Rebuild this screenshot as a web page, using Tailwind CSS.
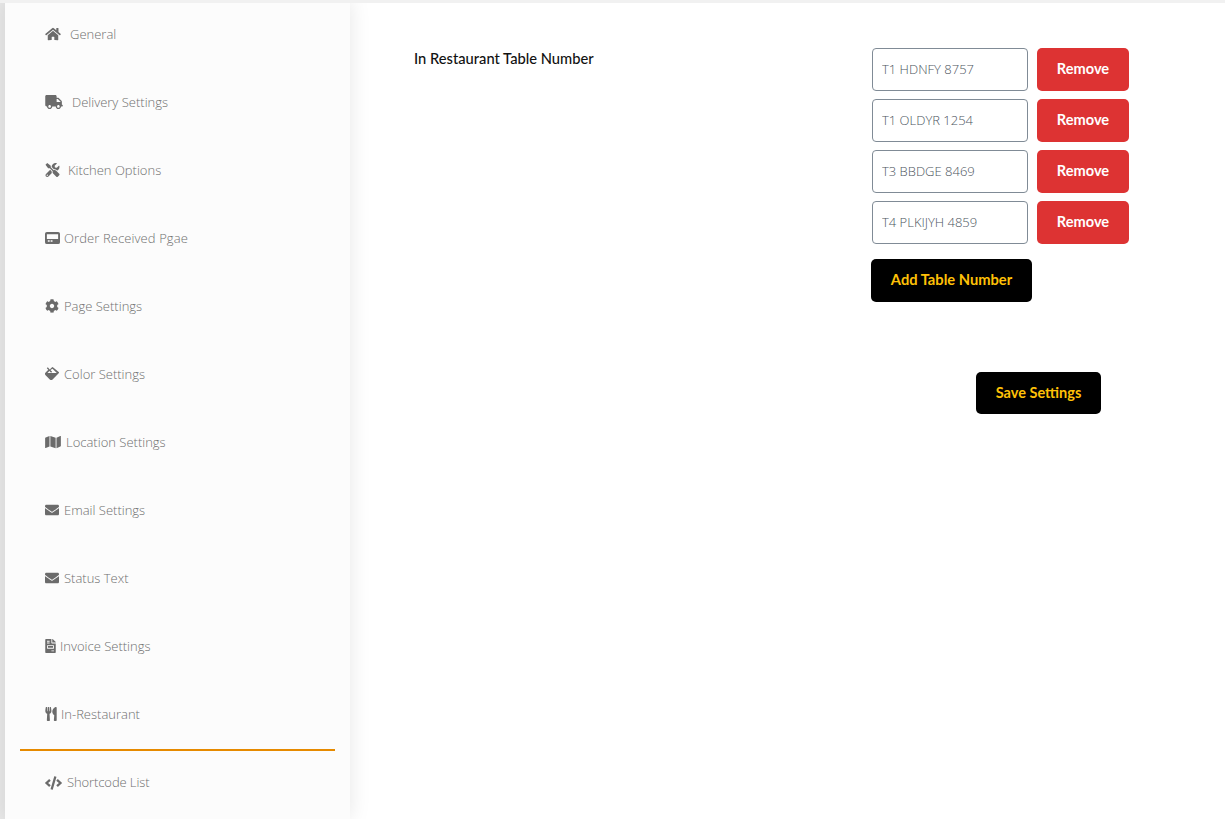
<!DOCTYPE html>
<html lang="en">
<head>
  <meta charset="UTF-8" />
  <title>In-Restaurant Settings</title>
  <meta name="viewport" content="width=device-width, initial-scale=1.0" />
  <script src="https://cdn.jsdelivr.net/npm/@tailwindcss/browser@4"></script>
</head>
<body class="bg-white h-[819px] overflow-hidden relative flex font-['Open_Sans',sans-serif]">
  <div class="absolute top-0 left-0 w-full h-[3px] bg-[#f1f1f1] z-10"></div>
  <div class="w-[5px] bg-[#e8e8e8]"></div>

  <aside class="w-[345px] bg-[#fcfcfc] shadow-[0_0_20px_rgba(0,0,0,0.1)] flex flex-col pl-[15px] pr-[15px] text-[13px] font-light text-[#6f6f6f]">
    <a class="h-[68px] flex items-center pl-[25px]">
      <svg class="h-[14px] w-[16px] fill-[#6b6b6b] mr-[9px]" viewBox="0 0 576 512"><path d="M280.37 148.26L96 300.11V464a16 16 0 0 0 16 16l112.06-.29a16 16 0 0 0 15.92-16V368a16 16 0 0 1 16-16h64a16 16 0 0 1 16 16v95.64a16 16 0 0 0 16 16.05L464 480a16 16 0 0 0 16-16V300L295.67 148.26a12.19 12.19 0 0 0-15.3 0zM571.6 251.47L488 182.56V44.05a12 12 0 0 0-12-12h-56a12 12 0 0 0-12 12v72.61L318.47 43a48 48 0 0 0-61 0L4.34 251.47a12 12 0 0 0-1.6 16.9l25.5 31A12 12 0 0 0 45.15 301l235.22-193.74a12.19 12.19 0 0 1 15.3 0L530.9 301a12 12 0 0 0 16.9-1.6l25.5-31a12 12 0 0 0-1.7-16.93z"/></svg>
      <span class="pt-[2px]">General</span>
    </a>
    <a class="h-[68px] flex items-center pl-[25px]">
      <svg class="h-[14px] w-[18px] fill-[#6b6b6b] mr-[9px]" viewBox="0 0 640 512"><path d="M624 352h-16V243.900c0-12.700-5.100-24.900-14.100-33.900L494 110.100c-9-9-21.200-14.100-33.900-14.100H416V48c0-26.500-21.500-48-48-48H48C21.500 0 0 21.500 0 48v320c0 26.500 21.500 48 48 48h16c0 53 43 96 96 96s96-43 96-96h128c0 53 43 96 96 96s96-43 96-96h48c8.800 0 16-7.200 16-16v-32c0-8.800-7.200-16-16-16zM160 464c-26.500 0-48-21.500-48-48s21.500-48 48-48 48 21.500 48 48-21.500 48-48 48zm320 0c-26.500 0-48-21.500-48-48s21.500-48 48-48 48 21.500 48 48-21.500 48-48 48zm80-208H416V144h44.100l99.900 99.900V256z"/></svg>
      <span class="pt-[2px]">Delivery Settings</span>
    </a>
    <a class="h-[68px] flex items-center pl-[25px]">
      <svg class="h-[14px] w-[15px] fill-[#6b6b6b] mr-[8px]" viewBox="0 0 512 512"><path d="M501.1 395.7L384 278.6c-23.1-23.1-57.6-27.6-85.4-13.9L192 158.1V96L64 0 0 64l96 128h62.1l106.6 106.6c-13.6 27.8-9.2 62.3 13.9 85.4l117.1 117.1c14.6 14.6 38.2 14.6 52.7 0l52.7-52.7c14.5-14.6 14.5-38.2 0-52.7zM331.7 225c28.3 0 54.9 11 74.9 31l19.4 19.4c15.8-6.9 30.8-16.5 43.8-29.5 37.1-37.1 49.7-89.3 37.9-136.7-2.2-9-13.5-12.1-20.1-5.5l-74.4 74.4-67.9-11.3L334 98.9l74.4-74.4c6.6-6.6 3.4-17.9-5.7-20.2-47.4-11.7-99.6.9-136.6 37.9-28.5 28.5-41.9 66.1-41.2 103.6l82.1 82.1c8.1-1.9 16.5-2.9 24.7-2.9zm-103.9 82l-56.7-56.7L18.7 402.8c-25 25-25 65.5 0 90.5s65.5 25 90.5 0l123.6-123.6c-7.6-19.9-9.9-41.6-5-62.7zM64 472c-13.2 0-24-10.8-24-24 0-13.3 10.7-24 24-24s24 10.7 24 24c0 13.2-10.7 24-24 24z"/></svg>
      <span class="pt-[2px]">Kitchen Options</span>
    </a>
    <a class="h-[68px] flex items-center pl-[25px]">
      <svg class="h-[14px] w-[15px] fill-[#6b6b6b] mr-[4px]" viewBox="0 0 16 14"><path fill-rule="evenodd" d="M2 .5h12a2 2 0 0 1 2 2v9a2 2 0 0 1-2 2H2a2 2 0 0 1-2-2v-9a2 2 0 0 1 2-2zM2 3v5h12V3zM3 9.500V11h2V9.500zM6 9.500V11h2V9.500z"/></svg>
      <span class="pt-[2px] tracking-[0.1px]">Order Received Pgae</span>
    </a>
    <a class="h-[68px] flex items-center pl-[25px]">
      <svg class="h-[14px] w-[14px] fill-[#6b6b6b] mr-[5px]" viewBox="0 0 512 512"><path d="M487.4 315.7l-42.6-24.6c4.3-23.2 4.3-47 0-70.2l42.6-24.6c4.9-2.8 7.1-8.6 5.5-14-11.1-35.6-30-67.8-54.7-94.6-3.8-4.1-10-5.1-14.8-2.3L380.8 110c-17.9-15.4-38.5-27.3-60.8-35.1V25.8c0-5.6-3.9-10.5-9.4-11.7-36.7-8.2-74.3-7.8-109.2 0-5.5 1.2-9.4 6.1-9.4 11.7V75c-22.2 7.9-42.8 19.8-60.8 35.1L88.7 85.5c-4.9-2.8-11-1.9-14.8 2.3-24.7 26.7-43.6 58.9-54.7 94.6-1.7 5.4.6 11.2 5.5 14L67.3 221c-4.3 23.2-4.3 47 0 70.2l-42.6 24.6c-4.9 2.8-7.1 8.6-5.5 14 11.1 35.6 30 67.8 54.7 94.6 3.8 4.1 10 5.1 14.8 2.3l42.6-24.6c17.9 15.4 38.5 27.3 60.8 35.1v49.2c0 5.6 3.9 10.5 9.4 11.7 36.7 8.2 74.3 7.8 109.2 0 5.5-1.2 9.4-6.1 9.4-11.7v-49.2c22.2-7.9 42.8-19.8 60.8-35.1l42.6 24.6c4.9 2.8 11 1.9 14.8-2.3 24.7-26.7 43.6-58.9 54.7-94.6 1.5-5.5-.7-11.3-5.6-14.1zM256 336c-44.1 0-80-35.9-80-80s35.9-80 80-80 80 35.9 80 80-35.9 80-80 80z"/></svg>
      <span class="pt-[2px]">Page Settings</span>
    </a>
    <a class="h-[68px] flex items-center pl-[25px]">
      <svg class="h-[14px] w-[14px] fill-[#6b6b6b] mr-[5px]" viewBox="0 0 14 14"><path fill-rule="evenodd" d="M2.800.2 1.800 1.200 3.300 2.700.6 5.400a2 2 0 0 0 0 2.800l4.200 4.200a2 2 0 0 0 2.800 0l6.100-6.100a1 1 0 0 0 0-1.400L8.200.4a1 1 0 0 0-1.400 0L4.700 2.500zM7.500 1.800l4.300 4.200H2.500L4.400 4.100l1.700 1.700 1-1-1.700-1.700z"/></svg>
      <span class="pt-[2px]">Color Settings</span>
    </a>
    <a class="h-[68px] flex items-center pl-[25px]">
      <svg class="h-[14px] w-[16px] fill-[#6b6b6b] mr-[5px]" viewBox="0 0 576 512"><path d="M0 117.66v346.32c0 11.32 11.43 19.06 21.94 14.86L160 416V32L20.12 87.95A32.006 32.006 0 0 0 0 117.66zM192 416l192 64V96L192 32v384zM554.06 33.16L416 96v384l139.88-55.95A31.996 31.996 0 0 0 576 394.34V48.02c0-11.32-11.43-19.06-21.94-14.86z"/></svg>
      <span class="pt-[2px]">Location Settings</span>
    </a>
    <a class="h-[68px] flex items-center pl-[25px]">
      <svg class="h-[14px] w-[14px] fill-[#6b6b6b] mr-[5px]" viewBox="0 0 512 512"><path d="M502.3 190.8c3.9-3.1 9.700-.2 9.700 4.700V400c0 26.500-21.500 48-48 48H48c-26.500 0-48-21.500-48-48V195.600c0-5 5.700-7.800 9.700-4.700 22.400 17.400 52.100 39.500 154.100 113.600 21.100 15.400 56.700 47.800 92.200 47.600 35.700.3 72-32.800 92.300-47.600 102-74.100 131.600-96.300 154-113.700zM256 320c23.200.4 56.600-29.200 73.400-41.400 132.700-96.300 142.800-104.700 173.400-128.700 5.800-4.500 9.200-11.500 9.200-18.900v-19c0-26.500-21.500-48-48-48H48C21.500 64 0 85.500 0 112v19c0 7.400 3.400 14.300 9.200 18.900 30.600 23.900 40.700 32.400 173.400 128.700 16.800 12.200 50.200 41.800 73.400 41.400z"/></svg>
      <span class="pt-[2px]">Email Settings</span>
    </a>
    <a class="h-[68px] flex items-center pl-[25px]">
      <svg class="h-[14px] w-[14px] fill-[#6b6b6b] mr-[5px]" viewBox="0 0 512 512"><path d="M502.3 190.8c3.9-3.1 9.700-.2 9.700 4.700V400c0 26.500-21.500 48-48 48H48c-26.500 0-48-21.500-48-48V195.600c0-5 5.700-7.800 9.700-4.700 22.400 17.400 52.100 39.500 154.100 113.600 21.100 15.400 56.700 47.800 92.200 47.600 35.700.3 72-32.800 92.300-47.600 102-74.100 131.600-96.300 154-113.700zM256 320c23.200.4 56.600-29.200 73.400-41.400 132.700-96.300 142.800-104.700 173.400-128.700 5.800-4.500 9.200-11.500 9.200-18.900v-19c0-26.500-21.500-48-48-48H48C21.500 64 0 85.500 0 112v19c0 7.400 3.400 14.300 9.200 18.900 30.600 23.900 40.700 32.400 173.400 128.700 16.800 12.200 50.200 41.800 73.400 41.400z"/></svg>
      <span class="pt-[2px]">Status Text</span>
    </a>
    <a class="h-[68px] flex items-center pl-[25px]">
      <svg class="h-[14px] w-[11px] fill-[#6b6b6b] mr-[4px]" viewBox="0 0 384 512"><path d="M288 256H96v64h192v-64zm89-151L279.100 7c-4.500-4.500-10.600-7-17-7H256v128h128v-6.100c0-6.300-2.500-12.400-7-16.900zm-153 31V0H24C10.700 0 0 10.700 0 24v464c0 13.300 10.700 24 24 24h336c13.300 0 24-10.700 24-24V160H248c-13.200 0-24-10.800-24-24zM64 72c0-4.420 3.580-8 8-8h80c4.420 0 8 3.580 8 8v16c0 4.420-3.580 8-8 8H72c-4.420 0-8-3.580-8-8V72zm0 64c0-4.420 3.580-8 8-8h80c4.420 0 8 3.580 8 8v16c0 4.420-3.580 8-8 8H72c-4.420 0-8-3.580-8-8v-16zm256 304c0 4.420-3.580 8-8 8h-80c-4.420 0-8-3.580-8-8v-16c0-4.420 3.580-8 8-8h80c4.420 0 8 3.580 8 8v16zm0-200v96c0 8.840-7.160 16-16 16H80c-8.840 0-16-7.160-16-16v-96c0-8.840 7.160-16 16-16h224c8.840 0 16 7.160 16 16z"/></svg>
      <span class="pt-[2px]">Invoice Settings</span>
    </a>
    <a class="h-[71px] flex items-center pl-[25px] pb-[2px] border-b-2 border-[#e68a00]">
      <svg class="h-[14px] w-[12px] fill-[#6b6b6b] mr-[4px]" viewBox="0 0 416 512"><path d="M207.900 15.200c.8 4.700 16.100 94.500 16.100 128.800 0 52.300-27.800 89.600-68.900 104.600L168 486.700c.7 13.700-10.200 25.300-24 25.300H80c-13.700 0-24.700-11.500-24-25.300l12.900-238.100C27.700 233.600 0 196.200 0 144 0 109.600 15.300 19.900 16.100 15.200 19.300-5.100 61.400-5.400 64 16.300v141.200c1.300 3.400 15.100 3.200 16 0 1.400-25.300 7.900-139.200 8-141.800 3.300-20.800 44.700-20.800 47.900 0 .2 2.700 6.600 116.500 8 141.800.9 3.200 14.800 3.400 16 0V16.300c2.600-21.600 44.800-21.400 48-1.100zm119.200 285.700l-15 185.100c-1.200 14 9.900 26 23.900 26h56c13.300 0 24-10.700 24-24V24c0-13.200-10.700-24-24-24-82.500 0-221.400 178.500-64.900 300.900z"/></svg>
      <span class="pt-[2px]">In-Restaurant</span>
    </a>
    <a class="h-[63px] flex items-center pl-[25px]">
      <svg class="h-[14px] w-[17px] fill-[#6b6b6b] mr-[5px]" viewBox="0 0 640 512"><path d="M278.900 511.500l-61-17.700c-6.400-1.800-10-8.500-8.200-14.900L346.200 8.700c1.800-6.400 8.500-10 14.900-8.200l61 17.700c6.400 1.800 10 8.500 8.200 14.900L293.800 503.300c-1.900 6.400-8.500 10.100-14.900 8.200zm-114-112.200l43.500-46.400c4.600-4.900 4.300-12.700-.8-17.200L117 256l90.600-79.700c5.100-4.500 5.500-12.300.8-17.200l-43.500-46.400c-4.500-4.800-12.100-5.100-17-.5L3.800 247.200c-5.100 4.700-5.100 12.800 0 17.500l144.100 135.100c4.900 4.600 12.500 4.400 17-.5zm327.200.6l144.100-135.100c5.100-4.700 5.100-12.800 0-17.500L492.100 112.100c-4.800-4.500-12.400-4.300-17 .5L431.600 159c-4.600 4.900-4.300 12.700.8 17.200L523 256l-90.600 79.700c-5.100 4.500-5.500 12.300-.8 17.200l43.500 46.400c4.500 4.900 12.100 5.100 17 .6z"/></svg>
      <span class="tracking-[-0.1px]">Shortcode List</span>
    </a>
  </aside>

  <main class="flex-1 flex flex-col pt-[48px] pl-[64px]">
    <div class="flex">
      <label class="w-[457px] text-[14.7px] leading-[20px] font-medium text-[#111] font-['Lato',sans-serif]">In Restaurant Table Number</label>
      <div class="flex flex-col">
        <div class="flex flex-col gap-[8px] pl-[1px]">
          <div class="flex gap-[9px]">
            <input value="T1 HDNFY 8757" class="w-[156px] h-[43px] border border-[#808b96] rounded-[4px] px-[9px] pb-[2px] text-[13px] font-light text-[#4d5560] bg-white" />
            <button class="w-[92px] h-[43px] pb-[2px] bg-[#dd3333] rounded-[5px] text-white text-[14.6px] font-bold font-['Lato',sans-serif]">Remove</button>
          </div>
          <div class="flex gap-[9px]">
            <input value="T1 OLDYR 1254" class="w-[156px] h-[43px] border border-[#808b96] rounded-[4px] px-[9px] pb-[2px] text-[13px] font-light text-[#4d5560] bg-white" />
            <button class="w-[92px] h-[43px] pb-[2px] bg-[#dd3333] rounded-[5px] text-white text-[14.6px] font-bold font-['Lato',sans-serif]">Remove</button>
          </div>
          <div class="flex gap-[9px]">
            <input value="T3 BBDGE 8469" class="w-[156px] h-[43px] border border-[#808b96] rounded-[4px] px-[9px] pb-[2px] text-[13px] font-light text-[#4d5560] bg-white" />
            <button class="w-[92px] h-[43px] pb-[2px] bg-[#dd3333] rounded-[5px] text-white text-[14.6px] font-bold font-['Lato',sans-serif]">Remove</button>
          </div>
          <div class="flex gap-[9px]">
            <input value="T4 PLKIJYH 4859" class="w-[156px] h-[43px] border border-[#808b96] rounded-[4px] px-[9px] pb-[2px] text-[13px] font-light text-[#4d5560] bg-white" />
            <button class="w-[92px] h-[43px] pb-[2px] bg-[#dd3333] rounded-[5px] text-white text-[14.6px] font-bold font-['Lato',sans-serif]">Remove</button>
          </div>
        </div>
        <button class="mt-[15px] w-[161px] h-[43px] pb-[2px] bg-black rounded-[5px] text-[#ffc107] text-[14.7px] font-bold font-['Lato',sans-serif]">Add Table Number</button>
        <button class="mt-[70px] ml-[105px] w-[125px] h-[42px] bg-black rounded-[5px] text-[#ffc107] text-[14.5px] font-bold font-['Lato',sans-serif]">Save Settings</button>
      </div>
    </div>
  </main>
</body>
</html>
